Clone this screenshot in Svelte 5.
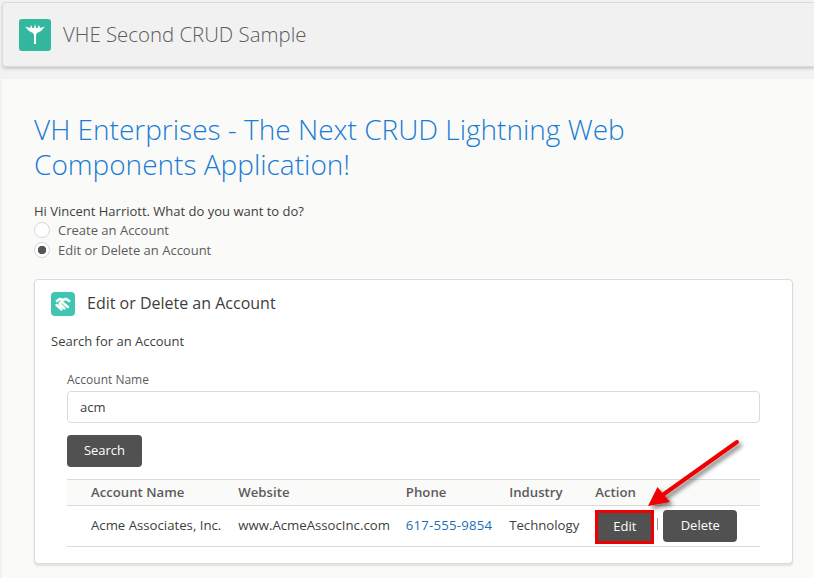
<script>
    let accountType = 'edit';
    let search = 'acm';

    const results = [
        {
            name: 'Acme Associates, Inc.',
            website: 'www.AcmeAssocInc.com',
            phone: '617-555-9854',
            industry: 'Technology'
        }
    ];
</script>

<div class="page">
    <header class="app-header">
        <span class="app-icon">
            <svg viewBox="0 0 32 32" width="32" height="32">
                <path d="M6 7.500L11 9L12 6L13.500 9H15L16 5L17 9H18.500L20 6L21 9L26 7.500L22 12L18 14L17 16V25H15V16L14 14L10 12Z" fill="#fff" />
            </svg>
        </span>
        <span class="app-title">VHE Second CRUD Sample</span>
    </header>

    <main class="panel">
        <h1>VH Enterprises - The Next CRUD Lightning Web Components Application!</h1>
        <p class="greeting">Hi Vincent Harriott. What do you want to do?</p>
        <label class="radio">
            <input type="radio" bind:group={accountType} value="create" />
            <span class="dot"></span>
            Create an Account
        </label>
        <label class="radio">
            <input type="radio" bind:group={accountType} value="edit" />
            <span class="dot"></span>
            Edit or Delete an Account
        </label>

        <section class="card">
            <div class="card-title">
                <span class="card-icon">
                    <svg viewBox="0 0 24 24" width="24" height="24">
                        <path d="M5 9.500l4-2.500 3 1 3-1 4 2.500" fill="none" stroke="#fff" stroke-width="2.600" />
                        <path d="M5.500 13l5 4.500M8.500 12l5 4.500M11.500 10.500l5.500 4.500M11 9l-2 2" fill="none" stroke="#fff" stroke-width="2.400" stroke-linecap="round" />
                    </svg>
                </span>
                <h2>Edit or Delete an Account</h2>
            </div>
            <p class="search-label">Search for an Account</p>

            <div class="search-area">
                <label class="field">
                    <span>Account Name</span>
                    <input type="text" bind:value={search} />
                </label>
                <button class="btn search">Search</button>

                <table>
                    <thead>
                        <tr>
                            <th>Account Name</th>
                            <th>Website</th>
                            <th>Phone</th>
                            <th>Industry</th>
                            <th class="action-col">Action</th>
                        </tr>
                    </thead>
                    <tbody>
                        {#each results as row}
                            <tr>
                                <td>{row.name}</td>
                                <td>{row.website}</td>
                                <td class="phone"><a href="#phone">{row.phone}</a></td>
                                <td>{row.industry}</td>
                                <td class="action-cell">
                                    <div class="actions">
                                        <button class="btn edit">Edit</button>
                                        <span class="sep"></span>
                                        <button class="btn delete">Delete</button>
                                    </div>
                                </td>
                            </tr>
                        {/each}
                    </tbody>
                </table>
            </div>
        </section>
    </main>

    <!-- red annotation arrow from the screenshot -->
    <svg class="arrow" viewBox="0 0 814 578" width="814" height="578">
        <defs>
            <filter id="arrow-shadow" x="-20%" y="-20%" width="150%" height="150%">
                <feDropShadow dx="3" dy="3" stdDeviation="2" flood-color="#000" flood-opacity="0.5" />
            </filter>
        </defs>
        <g filter="url(#arrow-shadow)">
            <path d="M737 442L664 494" stroke="#f00000" stroke-width="4" stroke-linecap="round" fill="none" />
            <path d="M648 506L657.500 487L670 502Z" fill="#f00000" />
        </g>
    </svg>
</div>

<style>
    :global(body) {
        background: #f8f8f7;
        overflow: hidden;
    }
    .page {
        position: relative;
        width: 814px;
        height: 578px;
        overflow: hidden;
        background: #f2f2f2;
        font-family: "Open Sans", "Liberation Sans", sans-serif;
        color: #3e3e3c;
        box-sizing: border-box;
        padding: 2px 0 0 2px;
    }
    .app-header {
        box-sizing: border-box;
        display: flex;
        align-items: center;
        gap: 12px;
        height: 65px;
        margin-bottom: 12px;
        padding-left: 16px;
        background: #f1f1f1;
        border: 1px solid #dcdbda;
        border-right: none;
        border-radius: 4px 0 0 4px;
        box-shadow: 0 2px 3px rgba(0, 0, 0, 0.16);
    }
    .app-icon {
        display: flex;
        width: 32px;
        height: 32px;
        background: #33b89f;
        border-radius: 3px;
    }
    .app-title {
        padding-bottom: 2px;
        font-size: 20.400px;
        font-weight: 300;
        color: #5c5c5c;
    }
    .panel {
        background: #fafaf9;
        padding: 33px 21px 0 32px;
        height: 500px;
    }
    h1 {
        margin: 0 0 20px;
        width: 640px;
        font-size: 28px;
        line-height: 35px;
        font-weight: 300;
        color: #1b7cd3;
    }
    .greeting {
        margin: 0;
        font-size: 13px;
        line-height: 18px;
    }
    .radio {
        display: flex;
        align-items: center;
        gap: 8px;
        height: 20px;
        font-size: 13px;
        color: #5c5c5c;
    }
    .radio input {
        display: none;
    }
    .dot {
        box-sizing: border-box;
        width: 16px;
        height: 16px;
        background: #fff;
        border: 1px solid #d8d8d8;
        border-radius: 50%;
    }
    .radio input:checked + .dot {
        background: radial-gradient(circle, #555 0 4px, #fff 4.500px);
    }
    .card {
        box-sizing: border-box;
        margin-top: 19px;
        height: 285px;
        background: #fff;
        border: 1px solid #dddbda;
        border-radius: 4px;
        box-shadow: 0 2px 2px rgba(0, 0, 0, 0.1);
        padding: 12px 16px 0;
    }
    .card-title {
        display: flex;
        align-items: center;
        gap: 12px;
    }
    .card-icon {
        display: flex;
        width: 24px;
        height: 24px;
        background: #3fc5b1;
        border-radius: 4px;
    }
    h2 {
        margin: 0 0 2px;
        font-size: 16px;
        font-weight: 400;
        color: #3e3e3c;
    }
    .search-label {
        margin: 15px 0 0;
        font-size: 13px;
        line-height: 20px;
    }
    .search-area {
        margin-top: 21px;
        padding: 0 16px;
    }
    .field {
        display: block;
    }
    .field span {
        display: block;
        font-size: 12px;
        line-height: 16px;
        margin-bottom: 3px;
        color: #5c5c5c;
    }
    .field input {
        box-sizing: border-box;
        width: 100%;
        height: 32px;
        padding: 0 12px;
        border: 1px solid #dddbda;
        border-radius: 4px;
        font: inherit;
        font-size: 13px;
        color: #3e3e3c;
        background: #fff;
        outline: none;
    }
    .btn {
        box-sizing: border-box;
        height: 32px;
        padding: 0 0 2px;
        background: #515151;
        border: none;
        border-radius: 4px;
        color: #fff;
        font: inherit;
        font-size: 13px;
        font-weight: 500;
    }
    .search {
        display: block;
        width: 75px;
        margin: 12px 0;
    }
    table {
        width: 100%;
        border-collapse: collapse;
        font-size: 13.200px;
    }
    th {
        box-sizing: border-box;
        height: 26px;
        padding: 0 0 2px 24px;
        text-align: left;
        font-weight: 600;
        color: #5c5c5c;
        background: #fafaf9;
        border-top: 1px solid #dddbda;
        border-bottom: 1px solid #dddbda;
    }
    td {
        box-sizing: border-box;
        height: 41px;
        padding: 0 0 2px 24px;
        border-bottom: 1px solid #dddbda;
        white-space: nowrap;
    }
    th + th, td + td {
        padding-left: 17px;
    }
    th:nth-child(3), td.phone {
        padding-left: 16px;
    }
    td.phone a {
        letter-spacing: 0.2px;
    }
    th.action-col {
        width: 100%;
        padding-left: 16px;
    }
    td.action-cell {
        padding: 1px 0 0 16px;
    }
    a {
        color: #1b6fb8;
        text-decoration: none;
    }
    .actions {
        display: flex;
        align-items: flex-start;
    }
    .edit {
        width: 59px;
        height: 34px;
        padding: 0 0 2px;
        border: 3px solid #f00000;
        border-radius: 0;
    }
    .sep {
        width: 1px;
        height: 12px;
        margin: 8px 5px 0 3px;
        background: #999;
    }
    .delete {
        width: 74px;
    }
    .arrow {
        position: absolute;
        top: 0;
        left: 0;
        pointer-events: none;
    }
</style>
